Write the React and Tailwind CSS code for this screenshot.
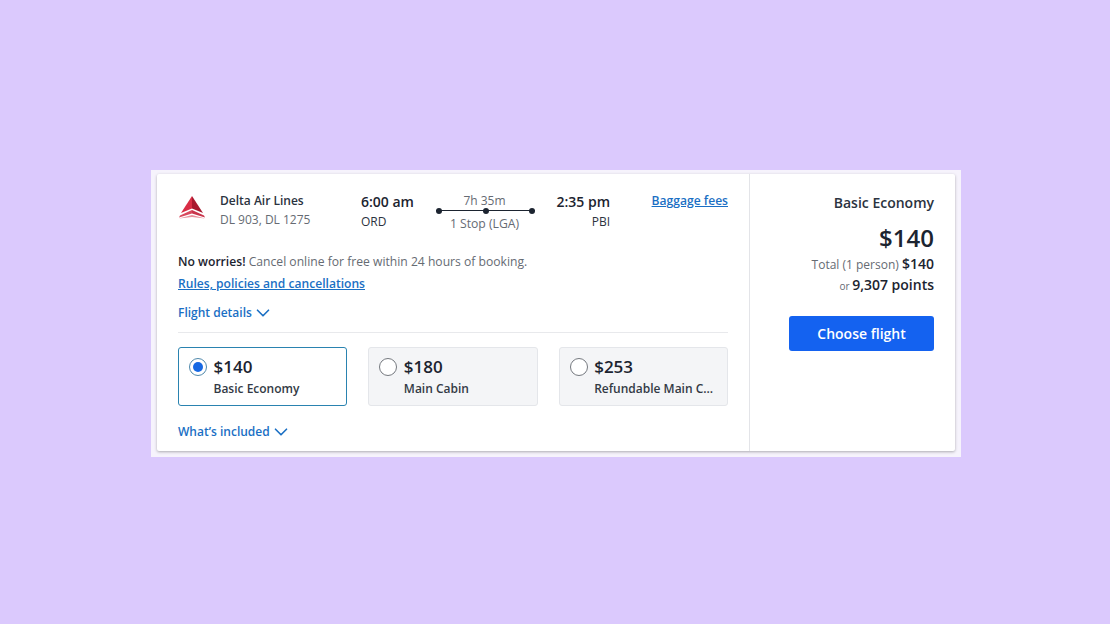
import { ChevronDown } from "lucide-react";

const font = { fontFamily: '"Open Sans", sans-serif' };

function DeltaLogo() {
  return (
    <svg viewBox="0 0 28 25" className="h-[25px] w-[28px] shrink-0" aria-hidden="true">
      <polygon points="14,1 14,13.5 3,18" fill="#d92d45" />
      <polygon points="14,1 25,18 14,13.5" fill="#a8182e" />
      <polygon points="14,15 26,20.5 27,22.5 14,18.5" fill="#c9354c" />
      <polygon points="14,15 2,20.5 1,22.5 14,18.5" fill="#d8485d" />
      <polygon points="1,23.5 14,20 27,23.5 14,22" fill="#e7909c" />
    </svg>
  );
}

function Radio({ selected }) {
  return (
    <span
      className={`flex h-[18px] w-[18px] shrink-0 items-center justify-center rounded-full border ${
        selected ? "border-[#4f88ab]" : "border-[#75797f] bg-white"
      }`}
    >
      {selected && <span className="h-[10px] w-[10px] rounded-full bg-[#1668e3]" />}
    </span>
  );
}

function FareOption({ price, name, selected }) {
  return (
    <div
      className={`flex h-[59px] min-w-0 flex-1 gap-[6.5px] rounded-[3px] border pl-[10px] pr-2 pt-[9px] ${
        selected ? "border-[#2a83b0] bg-white" : "border-[#e4e6ea] bg-[#f4f5f7]"
      }`}
    >
      <div className="pt-[1px]">
        <Radio selected={selected} />
      </div>
      <div className="min-w-0">
        <div className="text-[17px] font-semibold leading-[20px] text-[#1c2430]">{price}</div>
        <div className="mt-[3px] whitespace-nowrap text-[12px] font-semibold leading-[18px] text-[#333a45]">{name}</div>
      </div>
    </div>
  );
}

function Disclosure({ label }) {
  return (
    <div className="flex items-center text-[12px] font-semibold leading-[18px] text-[#1a6fc4]">
      {label}
      <ChevronDown size={22} strokeWidth={1.8} className="-my-[2px]" />
    </div>
  );
}

export default function App() {
  return (
    <div className="flex h-[624px] w-[1110px] items-center justify-center bg-[#dbc9fd] pl-[2px] pt-[3px]" style={font}>
      <div className="h-[287px] w-[810px] bg-[#f6f3fc] px-[6px] pb-[6px] pt-[4px]">
        <div className="flex h-[277px] rounded-[2px] bg-white shadow-[0_1px_3px_rgba(0,0,0,0.3)]">
          {/* left: itinerary and fares */}
          <div className="w-[593px] border-r border-[#e3e4e8] px-[21px] pt-[18px]">
            <div className="flex h-[48px]">
              <div className="pt-[3px]">
                <DeltaLogo />
              </div>
              <div className="ml-[14px] w-[141px]">
                <div className="text-[12px] font-semibold leading-[18px] text-[#2b3340]">Delta Air Lines</div>
                <div className="mt-[1px] text-[12px] leading-[18px] text-[#666b73]">DL 903, DL 1275</div>
              </div>
              <div className="w-[76px]">
                <div className="text-[14px] font-semibold leading-[20px] text-[#1c2430]">6:00 am</div>
                <div className="mt-[1px] text-[12px] leading-[18px] text-[#2b3340]">ORD</div>
              </div>
              <div className="flex w-[95px] flex-col items-center">
                <div className="text-[12px] leading-[18px] text-[#666b73]">7h 35m</div>
                <div className="relative ml-[2px] h-[1px] w-[99px] shrink-0 bg-[#1c2430]">
                  <span className="absolute -top-[2.5px] left-0 h-[6px] w-[6px] rounded-full bg-[#1c2430]" />
                  <span className="absolute -top-[2.5px] left-[46.5px] h-[6px] w-[6px] rounded-full bg-[#1c2430]" />
                  <span className="absolute -top-[2.5px] right-0 h-[6px] w-[6px] rounded-full bg-[#1c2430]" />
                </div>
                <div className="mt-[4px] whitespace-nowrap text-[12.2px] leading-[18px] text-[#666b73]">1 Stop (LGA)</div>
              </div>
              <div className="w-[78px] text-right">
                <div className="text-[14px] font-semibold leading-[20px] text-[#1c2430]">2:35 pm</div>
                <div className="mt-[1px] text-[12px] leading-[18px] text-[#2b3340]">PBI</div>
              </div>
              <div className="ml-auto text-[12.1px] font-semibold leading-[18px] text-[#1a6fc4] underline">Baggage fees</div>
            </div>

            <div className="mt-[13px] whitespace-nowrap text-[12.15px] leading-[18px] text-[#666b73]">
              <span className="font-semibold text-[#1c2430]">No worries!</span> Cancel online for free within 24 hours of booking.
            </div>
            <div className="mt-[4px] text-[12.1px] font-semibold leading-[18px] text-[#1a6fc4] underline">
              Rules, policies and cancellations
            </div>
            <div className="mt-[11px]">
              <Disclosure label="Flight details" />
            </div>
            <div className="mt-[10px] h-[1px] bg-[#e8e9ec]" />

            <div className="mt-[14px] flex gap-[21px]">
              <FareOption price="$140" name="Basic Economy" selected />
              <FareOption price="$180" name="Main Cabin" />
              <FareOption price="$253" name="Refundable Main C…" />
            </div>
            <div className="mt-[17px]">
              <Disclosure label="What’s included" />
            </div>
          </div>

          {/* right: price summary */}
          <div className="flex flex-1 flex-col items-end pl-[39px] pr-[21px] pt-[19px] text-right">
            <div className="text-[14px] font-semibold leading-[20px] text-[#2b3340]">Basic Economy</div>
            <div className="mt-[10px] text-[24px] font-semibold leading-[30px] text-[#1c2430]">$140</div>
            <div className="mt-[1px] text-[12px] leading-[20px] text-[#666b73]">
              Total (1 person) <span className="text-[14px] font-semibold text-[#1c2430]">$140</span>
            </div>
            <div className="text-[10px] leading-[20px] text-[#666b73]">
              or <span className="text-[14px] font-semibold text-[#1c2430]">9,307 points</span>
            </div>
            <button className="mt-[20px] h-[35px] w-full rounded-[3px] bg-[#1462f0] text-[14px] font-semibold text-white">
              Choose flight
            </button>
          </div>
        </div>
      </div>
    </div>
  );
}
